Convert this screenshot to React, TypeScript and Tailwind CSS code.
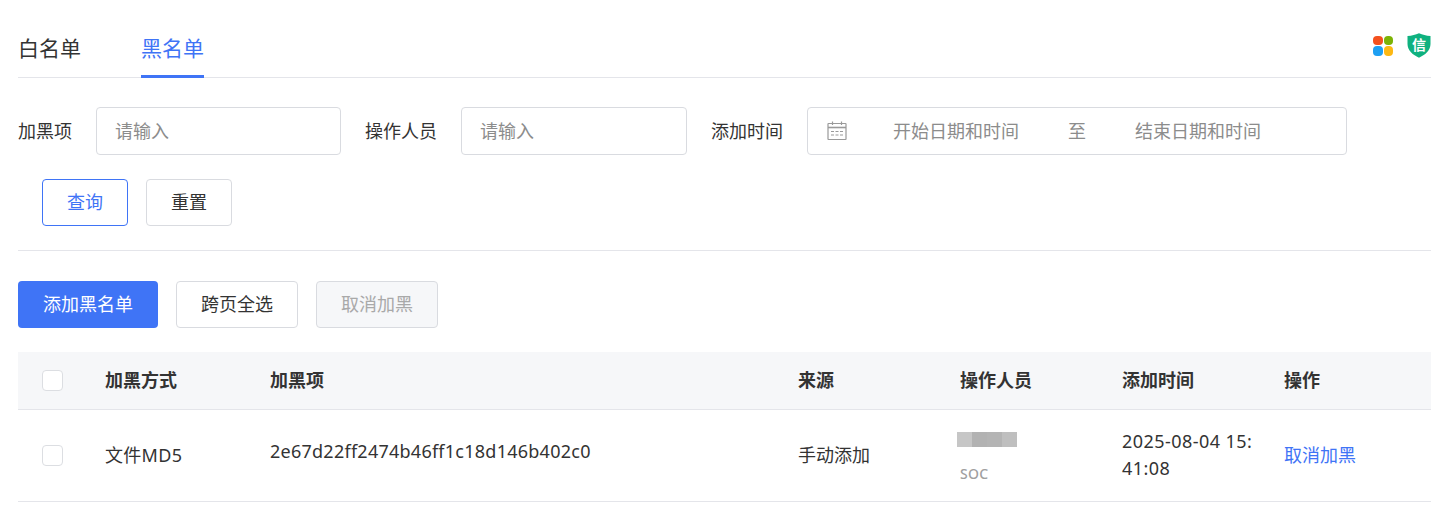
const font = { fontFamily: '"Noto Sans", "Noto Sans CJK SC", sans-serif' };

function Checkbox() {
  return <span className="block w-[21px] h-[21px] rounded-[4px] border border-[#dcdee2] bg-white" />;
}

function CalendarIcon() {
  return (
    <svg width="20" height="20" viewBox="0 0 20 20" fill="none" stroke="#9a9a9a" strokeWidth="1.2">
      <rect x="1" y="2.5" width="18" height="16" rx="0.5" />
      <path d="M1 6.5h18" strokeWidth="1.6" />
      <path d="M5.5 0.5v3.5M14.5 0.5v3.5" />
      <path d="M4 10.5h3M8.5 10.5h3M13 10.5h3M4 14h3M8.5 14h3M13 14h3" />
    </svg>
  );
}

function AppsIcon() {
  return (
    <div className="grid grid-cols-2 gap-[1px] w-[20px] h-[20px]">
      <span className="rounded-[4px] bg-[#f4511e]" />
      <span className="rounded-[4px] bg-[#7cb305]" />
      <span className="rounded-[4px] bg-[#1e9ff2]" />
      <span className="rounded-[4px] bg-[#fdb813]" />
    </div>
  );
}

function ShieldIcon() {
  return (
    <div className="relative w-[24px] h-[25px]">
      <svg width="24" height="25" viewBox="0 0 24 25" className="absolute inset-0">
        <path d="M0.5 3 C5 2.8 8.5 1.8 12 0.3 C15.5 1.8 19 2.8 23.5 3 L23.5 11 C23.5 17.5 18 22 12 24.7 C6 22 0.5 17.5 0.5 11 Z" fill="#0fb17f" />
      </svg>
      <span className="absolute inset-0 flex items-center justify-center text-[14px] font-bold leading-none text-white pb-[2px]">信</span>
    </div>
  );
}

function Field({ label, width }: { label: string; width: string }) {
  return (
    <>
      <span className="mr-6 leading-[48px]">{label}</span>
      <div className={`${width} h-12 mr-6 flex items-center pl-[18px] rounded-[4px] border border-[#d9dbe0] text-[#8c8c8c]`}>请输入</div>
    </>
  );
}

const columns = ["w-[87px]", "w-[165px]", "w-[528px]", "w-[162px]", "w-[162px]", "w-[162px]", "flex-1"];

export default function App() {
  return (
    <div style={font} className="pl-[18px] pr-[25px] bg-white text-[18px] text-[#333] min-h-[515px]">
      <div className="h-[78px] flex items-start border-b border-[#e4e5ea]">
        <div className="mt-[32px] h-[45px] text-[21px] leading-[32px] mr-[60px]">白名单</div>
        <div className="mt-[32px] h-[46px] text-[21px] leading-[32px] text-[#3f74f6] border-b-[3px] border-[#3f74f6]">黑名单</div>
        <div className="ml-auto mt-[33px] flex items-center gap-[14px]">
          <AppsIcon />
          <ShieldIcon />
        </div>
      </div>

      <div className="mt-[29px] flex items-center">
        <Field label="加黑项" width="w-[245px]" />
        <Field label="操作人员" width="w-[226px]" />
        <span className="mr-6 leading-[48px]">添加时间</span>
        <div className="w-[540px] h-12 flex items-center rounded-[4px] border border-[#d9dbe0] text-[#8c8c8c]">
          <span className="ml-[19px] mr-[46px]"><CalendarIcon /></span>
          <span>开始日期和时间</span>
          <span className="ml-[49px] mr-[49px]">至</span>
          <span>结束日期和时间</span>
        </div>
      </div>

      <div className="mt-6 ml-6 flex gap-[18px]">
        <button className="w-[86px] h-[47px] rounded-[4px] border border-[#3f74f6] text-[#3f74f6]">查询</button>
        <button className="w-[86px] h-[47px] rounded-[4px] border border-[#d9dbe0]">重置</button>
      </div>

      <div className="mt-6 border-t border-[#e4e5ea]" />

      <div className="mt-[30px] flex gap-[18px]">
        <button className="w-[140px] h-[47px] rounded-[4px] bg-[#3f74f6] text-white">添加黑名单</button>
        <button className="w-[122px] h-[47px] rounded-[4px] border border-[#d9dbe0]">跨页全选</button>
        <button className="w-[122px] h-[47px] rounded-[4px] border border-[#d9dbe0] bg-[#f6f7f9] text-[#a9a9a9]">取消加黑</button>
      </div>

      <div className="mt-6">
        <div className="h-[58px] flex items-center bg-[#f6f7f9] border-b border-[#e4e5ea] font-bold">
          <div className={`${columns[0]} pl-6`}><Checkbox /></div>
          <div className={columns[1]}>加黑方式</div>
          <div className={columns[2]}>加黑项</div>
          <div className={columns[3]}>来源</div>
          <div className={columns[4]}>操作人员</div>
          <div className={columns[5]}>添加时间</div>
          <div className={columns[6]}>操作</div>
        </div>
        <div className="h-[92px] flex items-center border-b border-[#e4e5ea]">
          <div className={`${columns[0]} pl-6`}><Checkbox /></div>
          <div className={`${columns[1]} tracking-[0.3px]`}>文件MD5</div>
          <div className={`${columns[2]} pb-[8px] tracking-[0.25px]`}>2e67d22ff2474b46ff1c18d146b402c0</div>
          <div className={columns[3]}>手动添加</div>
          <div className={`${columns[4]} pt-[4px]`}>
            <div className="flex -ml-[3px] mb-[18px]">
              <span className="w-[15px] h-[15px] bg-[#c6c6c6]" />
              <span className="w-[15px] h-[15px] bg-[#b2b2b2]" />
              <span className="w-[15px] h-[15px] bg-[#b4b4b4]" />
              <span className="w-[15px] h-[15px] bg-[#bfbfbf]" />
            </div>
            <div className="text-[14px] leading-[18px] font-medium tracking-[0.3px] text-[#a0a0a0]">SOC</div>
          </div>
          <div className={`${columns[5]} pr-6 pb-[2px] leading-[27px] break-all tracking-[0.45px]`}>2025-08-04 15:41:08</div>
          <div className={`${columns[6]} text-[#3f74f6]`}>取消加黑</div>
        </div>
      </div>
    </div>
  );
}
